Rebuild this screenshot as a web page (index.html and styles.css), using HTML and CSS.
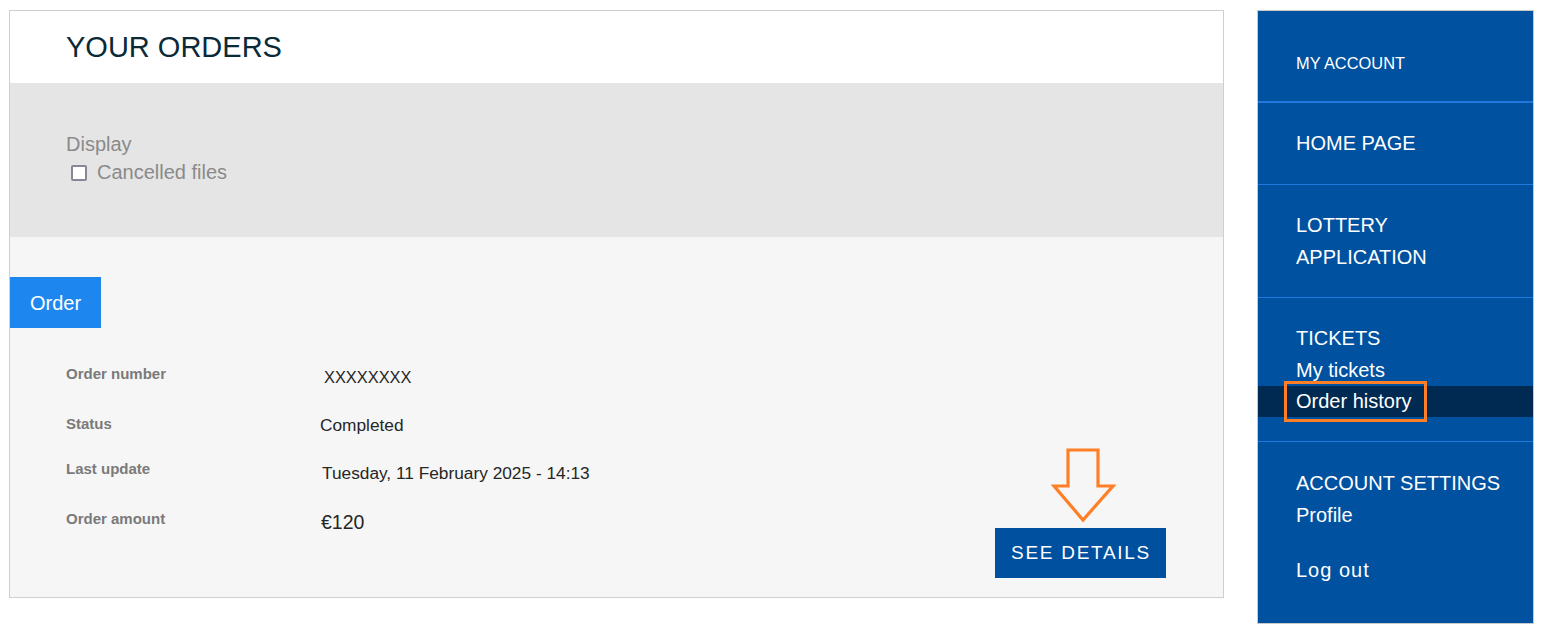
FILE: index.html
```html
<!DOCTYPE html>
<html lang="en">
<head>
<meta charset="utf-8">
<title>Your orders</title>
<link rel="stylesheet" href="styles.css">
</head>
<body>
<div class="page">
  <main class="card">
    <header class="card-head">
      <h1 class="title">YOUR ORDERS</h1>
    </header>
    <section class="filter">
      <div class="filter-label">Display</div>
      <label class="check"><span class="box"></span><span>Cancelled files</span></label>
    </section>
    <section class="orders">
      <div class="tab">Order</div>
      <div class="order">
        <div class="rows">
          <div class="row r1"><span class="lbl">Order number</span><span class="val val-x">XXXXXXXX</span></div>
          <div class="row r2"><span class="lbl">Status</span><span class="val">Completed</span></div>
          <div class="row r3"><span class="lbl">Last update</span><span class="val">Tuesday, 11 February 2025 - 14:13</span></div>
          <div class="row r4"><span class="lbl">Order amount</span><span class="val">€120</span></div>
        </div>
        <div class="action">
          <svg class="arrow" width="66" height="76" viewBox="0 0 66 76" aria-hidden="true">
            <path d="M17 2 H47 V38 H62 L32 72 L3 38 H17 Z" fill="none" stroke="#ff7f27" stroke-width="3.2" stroke-linejoin="miter"/>
          </svg>
          <button class="details">SEE DETAILS</button>
        </div>
      </div>
    </section>
  </main>
  <nav class="side">
    <div class="sec sec-account"><a class="item small">MY ACCOUNT</a></div>
    <div class="sec sec-home"><a class="item">HOME PAGE</a></div>
    <div class="sec sec-lottery"><a class="item">LOTTERY</a><a class="item">APPLICATION</a></div>
    <div class="sec sec-tickets">
      <a class="item">TICKETS</a>
      <a class="item">My tickets</a>
      <div class="item active"><span class="mark">Order history</span></div>
    </div>
    <div class="sec sec-settings">
      <a class="item">ACCOUNT SETTINGS</a>
      <a class="item">Profile</a>
      <a class="item logout">Log out</a>
    </div>
  </nav>
</div>
</body>
</html>
```
FILE: styles.css
```css
* { box-sizing: border-box; }
html, body { margin: 0; padding: 0; background: #fff; }
body { font-family: "Liberation Sans", Arial, sans-serif; }

.page {
  display: flex;
  align-items: flex-start;
  gap: 33px;
  padding: 10px 0 0 9px;
}

.card {
  width: 1215px;
  border: 1px solid #cfcfcf;
  background: #f6f6f6;
}

.card-head {
  height: 72px;
  background: #fff;
  display: flex;
  align-items: center;
  padding-left: 56px;
}
.title {
  margin: 0;
  font-weight: normal;
  font-size: 29px;
  color: #0a2a38;
  letter-spacing: 0;
  padding-top: 1px;
}

.filter {
  height: 154px;
  background: #e5e5e5;
  padding: 47px 0 0 56px;
  color: #8a8a8a;
  font-size: 20px;
  line-height: 28px;
}
.check { display: flex; align-items: center; gap: 10px; padding-left: 5px; }
.box {
  width: 16px; height: 16px;
  border: 2px solid #8a8794;
  border-radius: 2px;
  background: #fff;
  margin-top: 1px;
}

.orders {
  height: 360px;
  padding-top: 40px;
}
.tab {
  width: 91px;
  height: 51px;
  background: #1e87ef;
  color: #fff;
  font-size: 20px;
  display: flex;
  align-items: center;
  justify-content: center;
  padding-top: 2px;
}

.order {
  display: flex;
  justify-content: space-between;
  padding: 36px 57px 0 56px;
}
.rows { display: flex; flex-direction: column; }
.row { display: flex; align-items: flex-start; }
.r1, .r3 { height: 50px; }
.r2 { height: 45px; }
.r4 { height: 30px; }
.lbl {
  width: 254px;
  font-size: 15px;
  font-weight: bold;
  color: #7a7a7a;
  line-height: 20px;
}
.val {
  font-size: 17.3px;
  color: #262626;
  line-height: 20px;
  padding-top: 3px;
}
.val-x { padding-left: 4px; font-size: 16.4px; }
.r2 .val { padding-top: 1px; }
.r3 .val { padding-top: 4px; padding-left: 2px; }
.r4 .val { padding-left: 1px; font-size: 19.5px; }

.action {
  display: flex;
  flex-direction: column;
  align-items: center;
  padding-top: 84px;
}
.arrow { display: block; margin-left: 7px; margin-bottom: 4px; }
.details {
  width: 171px;
  height: 50px;
  border: 0;
  background: #0050a0;
  color: #fff;
  font-family: "Liberation Sans", Arial, sans-serif;
  font-size: 19px;
  letter-spacing: 1.7px;
  padding: 0 0 0 1px;
}

.side {
  width: 277px;
  height: 614px;
  background: #00519f;
  border: 1px solid #c9c9c9;
  display: flex;
  flex-direction: column;
}
.sec {
  display: flex;
  flex-direction: column;
  border-bottom: 1px solid #1f78de;
}
.item {
  display: block;
  color: #fff;
  font-size: 20px;
  line-height: 32px;
  padding-left: 38px;
  text-decoration: none;
}
.small { font-size: 16.4px; }
.sec-account { padding: 36px 0 22px; border-bottom: 2px solid #1f78de; }
.sec-home { padding: 24px 0 25px; }
.sec-lottery { padding: 24px 0 24px; }
.sec-tickets { padding: 24px 0 24px; }
.sec-tickets .active { background: #002a52; height: 31px; line-height: 31px; position: relative; }
.mark {
  position: absolute;
  left: 26px;
  top: -5px;
  height: 41px;
  width: 143px;
  border: 3px solid #ff7f27;
  line-height: 34px;
  padding-left: 9px;
}
.sec-settings { border-bottom: 0; padding-top: 25px; }
.logout { margin-top: 23px; letter-spacing: 1px; }
```
